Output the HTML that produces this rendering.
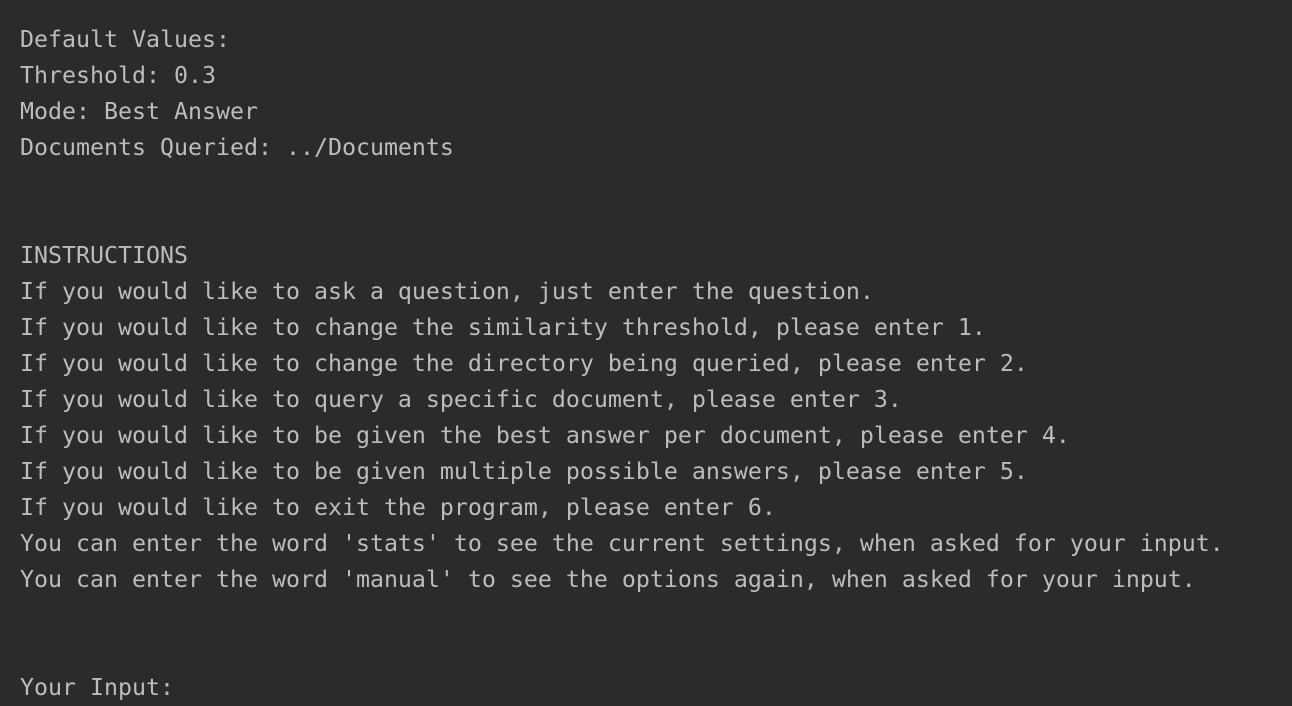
<!DOCTYPE html>
<html><head><style>
html,body{margin:0;padding:0;background:#2b2b2b;width:1292px;height:704px;overflow:hidden}
pre{margin:0;position:absolute;left:20px;top:22px;font-family:"DejaVu Sans Mono","Liberation Mono",monospace;font-size:23.25px;line-height:36px;color:#bcbcbc;white-space:pre}
</style></head><body><pre>Default Values:
Threshold: 0.3
Mode: Best Answer
Documents Queried: ../Documents


INSTRUCTIONS
If you would like to ask a question, just enter the question.
If you would like to change the similarity threshold, please enter 1.
If you would like to change the directory being queried, please enter 2.
If you would like to query a specific document, please enter 3.
If you would like to be given the best answer per document, please enter 4.
If you would like to be given multiple possible answers, please enter 5.
If you would like to exit the program, please enter 6.
You can enter the word 'stats' to see the current settings, when asked for your input.
You can enter the word 'manual' to see the options again, when asked for your input.


Your Input:</pre></body></html>
